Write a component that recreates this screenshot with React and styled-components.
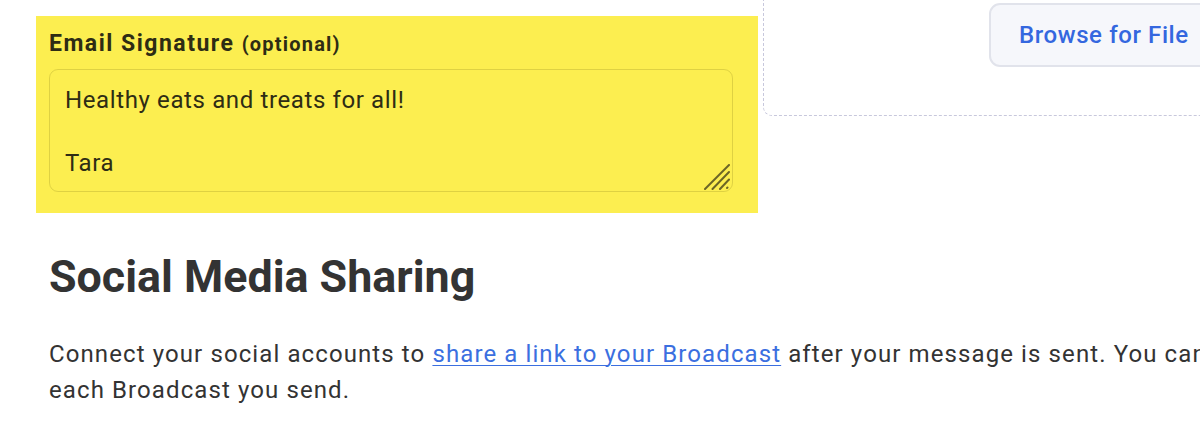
import React from "react";
import styled, { createGlobalStyle } from "styled-components";

const Global = createGlobalStyle`
  html, body { margin: 0; padding: 0; background: #ffffff; overflow: hidden; }
  body { font-family: Roboto, "Liberation Sans", sans-serif; color: #333333; }
  * { box-sizing: border-box; }
`;

const Page = styled.div`
  width: 1200px;
  height: 430px;
  overflow: hidden;
  padding: 16px 0 0 49px;
`;

const TopRow = styled.div`
  display: flex;
  align-items: flex-start;
  gap: 30px;
  width: 1500px;
`;

const FieldColumn = styled.div`
  flex: 0 0 684px;
`;

const Highlight = styled.div`
  background: #fcee50;
  margin: 0 -25px 0 -13px;
  padding: 11.5px 25px 21px 13px;
`;

const Label = styled.label`
  display: block;
  font-size: 23px;
  line-height: 31.36px;
  font-weight: 700;
  letter-spacing: 1.5px;
  color: #2e2c14;
  margin-bottom: 9px;
`;

const Optional = styled.span`
  font-size: 20px;
  letter-spacing: 1.2px;
  font-weight: 700;
`;

const TextBox = styled.div`
  position: relative;
`;

const TextArea = styled.textarea`
  display: block;
  width: 100%;
  height: 123px;
  margin: 0;
  padding: 15px 15px 0;
  border: 1px solid rgba(120, 110, 20, 0.22);
  border-radius: 9px;
  background: transparent;
  font-family: Roboto, "Liberation Sans", sans-serif;
  font-size: 24px;
  line-height: 31.7px;
  letter-spacing: 0.62px;
  color: #2e2c14;
  resize: none;
  outline: none;
  overflow: hidden;
`;

const Grip = styled.svg`
  position: absolute;
  right: 3px;
  bottom: 2px;
  width: 26px;
  height: 26px;
  pointer-events: none;
`;

const Dropzone = styled.div`
  flex: 0 0 600px;
  margin-top: -100px;
  height: 200px;
  border: 1px dashed #c8c8dc;
  border-radius: 9px;
  padding: 86px 0 0 225px;
`;

const BrowseButton = styled.button`
  height: 64px;
  padding: 0 30px 0 28px;
  border: 2px solid #e1e3eb;
  border-radius: 11px;
  background: #f6f7fb;
  color: #3467df;
  font-family: Roboto, "Liberation Sans", sans-serif;
  font-size: 24px;
  letter-spacing: 0.6px;
  font-weight: 500;
  white-space: nowrap;
  cursor: pointer;
`;

const Heading = styled.h2`
  margin: 37px 0 0;
  font-size: 44.8px;
  line-height: 53.76px;
  font-weight: 700;
  color: #333333;
`;

const Paragraph = styled.p`
  margin: 32px 0 0;
  width: 1600px;
  font-size: 24px;
  line-height: 36px;
  letter-spacing: 1.1px;
  white-space: nowrap;
  color: #333333;
`;

const Link = styled.a`
  color: #3b6fe0;
  text-decoration: underline;
  text-underline-offset: 3px;
  text-decoration-thickness: 1px;
`;

export default function App() {
  return (
    <>
      <Global />
      <Page>
        <TopRow>
          <FieldColumn>
            <Highlight>
              <Label htmlFor="sig">
                Email Signature <Optional>(optional)</Optional>
              </Label>
              <TextBox>
                <TextArea
                  id="sig"
                  defaultValue={"Healthy eats and treats for all!\n\nTara"}
                />
                <Grip viewBox="0 0 26 26">
                  <g stroke="#6b6526" strokeWidth="2" strokeLinecap="round">
                    <line x1="1" y1="25" x2="25" y2="1" />
                    <line x1="8.5" y1="25" x2="25" y2="8" />
                    <line x1="16" y1="25" x2="25" y2="15.5" />
                    <line x1="23" y1="24" x2="23.5" y2="23.5" />
                  </g>
                </Grip>
              </TextBox>
            </Highlight>
          </FieldColumn>
          <Dropzone>
            <BrowseButton type="button">Browse for File</BrowseButton>
          </Dropzone>
        </TopRow>
        <Heading>Social Media Sharing</Heading>
        <Paragraph>
          Connect your social accounts to{" "}
          <Link href="#">share a link to your Broadcast</Link> after your
          message is sent. You can customize the post for
          <br />
          each Broadcast you send.
        </Paragraph>
      </Page>
    </>
  );
}
